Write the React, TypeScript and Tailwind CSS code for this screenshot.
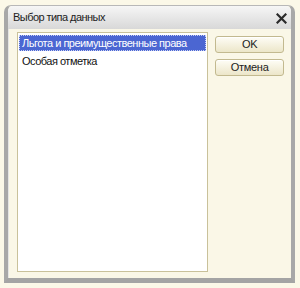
import { useState } from 'react';

const items = ['Льгота и преимущественные права', 'Особая отметка'];

export default function App() {
  const [sel, setSel] = useState(0);

  return (
    <div
      className="w-[300px] h-[288px] bg-[#fbf8e8] pl-[4px] pt-[5px] overflow-hidden"
      style={{ fontFamily: '"Liberation Sans", Arial, sans-serif' }}
    >
      <div className="w-[291px] h-[278px] flex flex-col rounded-t-[7px] border-t border-x-[4px] border-b-[5px] border-t-[#b8b8b8] border-x-[#a8a8a8] border-b-[#a4a4a4] bg-[#faf7e7]">
        <div className="h-[23px] flex items-center justify-between pl-[5px] pr-[4px] rounded-t-[5px] bg-gradient-to-b from-[#f6f6f6] to-[#d8d8d8]">
          <span className="text-[11px] tracking-[-0.55px] text-[#222] whitespace-nowrap">Выбор типа данных</span>
          <svg width="11" height="11" viewBox="0 0 11 11" className="mt-[1px]">
            <path d="M1.5 1.5 L9.5 9.5 M9.5 1.5 L1.5 9.5" stroke="#2a2a2a" strokeWidth="2.2" strokeLinecap="square" />
          </svg>
        </div>
        <div className="flex-1 flex pl-[8px] pr-[7px] pt-[3px] pb-[6px] gap-[7px] border-l border-[#e4e4e4]">
          <div className="w-[192px] h-[240px] bg-white border border-[#c9c19a] px-[1px] pt-[2px] flex flex-col">
            {items.map((t, i) => (
              <div
                key={t}
                onClick={() => setSel(i)}
                className={`h-[16px] mb-[2px] flex items-center pt-[1px] pl-[3px] text-[11px] tracking-[-0.5px] leading-none whitespace-nowrap ${
                  sel === i
                    ? 'bg-[#4b66d2] text-white outline-1 outline-dotted outline-[#c8d0f4] -outline-offset-1'
                    : 'text-[#111]'
                }`}
              >
                {t}
              </div>
            ))}
          </div>
          <div className="w-[69px] flex flex-col gap-[6px] pt-[4px]">
            <button className="h-[17px] rounded-[3px] border border-[#c2b98f] bg-gradient-to-b from-[#fefdf6] to-[#ece6c9] text-[11px] tracking-[-0.3px] text-[#222] leading-none shadow-[inset_0_1px_0_#fff]">
              OK
            </button>
            <button className="h-[17px] rounded-[3px] border border-[#c2b98f] bg-gradient-to-b from-[#fefdf6] to-[#ece6c9] text-[11px] tracking-[-0.3px] text-[#222] leading-none shadow-[inset_0_1px_0_#fff]">
              Отмена
            </button>
          </div>
        </div>
      </div>
    </div>
  );
}
